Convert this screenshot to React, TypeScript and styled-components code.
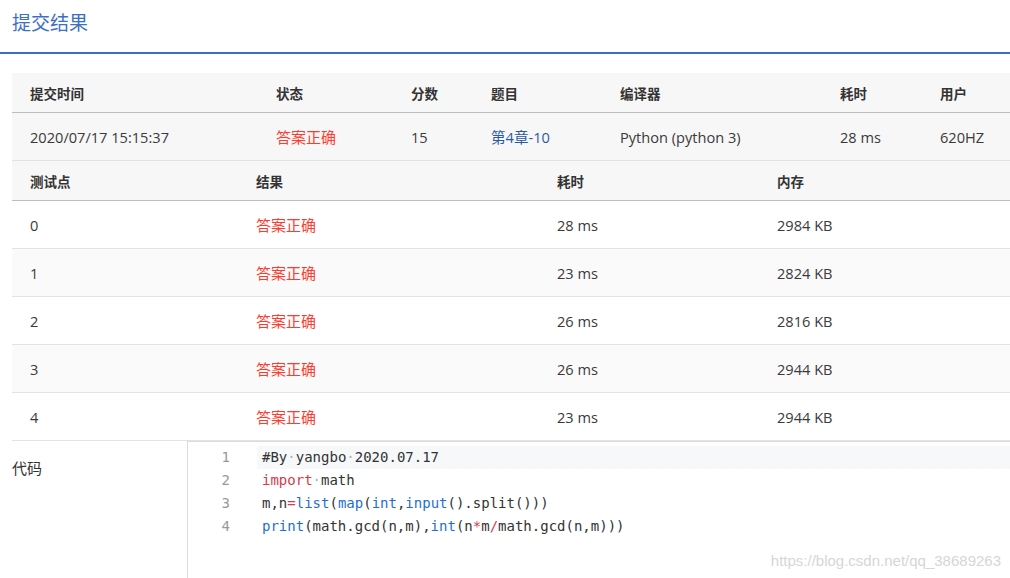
import React from 'react';
import styled, { createGlobalStyle } from 'styled-components';

const GlobalStyle = createGlobalStyle`
  html, body {
    margin: 0;
    padding: 0;
    background: #fff;
  }
  body {
    font-family: 'Open Sans', 'Noto Sans CJK SC', sans-serif;
    color: #333;
  }
`;

type Submission = {
  time: string;
  status: string;
  score: string;
  problem: string;
  compiler: string;
  cost: string;
  user: string;
};

const submission: Submission = {
  time: '2020/07/17 15:15:37',
  status: '答案正确',
  score: '15',
  problem: '第4章-10',
  compiler: 'Python (python 3)',
  cost: '28 ms',
  user: '620HZ',
};

const cases = [
  { id: '0', result: '答案正确', cost: '28 ms', memory: '2984 KB' },
  { id: '1', result: '答案正确', cost: '23 ms', memory: '2824 KB' },
  { id: '2', result: '答案正确', cost: '26 ms', memory: '2816 KB' },
  { id: '3', result: '答案正确', cost: '26 ms', memory: '2944 KB' },
  { id: '4', result: '答案正确', cost: '23 ms', memory: '2944 KB' },
];

type Tok = { t: string; k?: 'kw' | 'fn' | 'op' | 'ws' };

const codeLines: Tok[][] = [
  [
    { t: '#By' },
    { t: '·', k: 'ws' },
    { t: 'yangbo' },
    { t: '·', k: 'ws' },
    { t: '2020.07.17' },
  ],
  [{ t: 'import', k: 'kw' }, { t: '·', k: 'ws' }, { t: 'math' }],
  [
    { t: 'm,n' },
    { t: '=', k: 'op' },
    { t: 'list', k: 'fn' },
    { t: '(' },
    { t: 'map', k: 'fn' },
    { t: '(' },
    { t: 'int', k: 'fn' },
    { t: ',' },
    { t: 'input', k: 'fn' },
    { t: '().split()))' },
  ],
  [
    { t: 'print', k: 'fn' },
    { t: '(math.gcd(n,m),' },
    { t: 'int', k: 'fn' },
    { t: '(n' },
    { t: '*', k: 'op' },
    { t: 'm' },
    { t: '/', k: 'op' },
    { t: 'math.gcd(n,m)))' },
  ],
];

const App = () => {
  return (
    <Page>
      <GlobalStyle />
      <Title>提交结果</Title>
      <Content>
        <Table>
          <colgroup>
            <col style={{ width: 246 }} />
            <col style={{ width: 135 }} />
            <col style={{ width: 80 }} />
            <col style={{ width: 129 }} />
            <col style={{ width: 220 }} />
            <col style={{ width: 100 }} />
            <col />
          </colgroup>
          <thead>
            <tr>
              <Th>提交时间</Th>
              <Th>状态</Th>
              <Th>分数</Th>
              <Th>题目</Th>
              <Th>编译器</Th>
              <Th>耗时</Th>
              <Th>用户</Th>
            </tr>
          </thead>
          <tbody>
            <SummaryRow>
              <Td>{submission.time}</Td>
              <Td>
                <Accepted>{submission.status}</Accepted>
              </Td>
              <Td>{submission.score}</Td>
              <Td>
                <ProblemLink>{submission.problem}</ProblemLink>
              </Td>
              <Td>{submission.compiler}</Td>
              <Td>{submission.cost}</Td>
              <Td>{submission.user}</Td>
            </SummaryRow>
          </tbody>
        </Table>
        <Table>
          <colgroup>
            <col style={{ width: 226 }} />
            <col style={{ width: 301 }} />
            <col style={{ width: 220 }} />
            <col />
          </colgroup>
          <thead>
            <tr>
              <Th>测试点</Th>
              <Th>结果</Th>
              <Th>耗时</Th>
              <Th>内存</Th>
            </tr>
          </thead>
          <tbody>
            {cases.map((c, i) => (
              <CaseRow key={c.id} $striped={i % 2 === 1}>
                <Td>{c.id}</Td>
                <Td>
                  <Accepted>{c.result}</Accepted>
                </Td>
                <Td>{c.cost}</Td>
                <Td>{c.memory}</Td>
              </CaseRow>
            ))}
          </tbody>
        </Table>
        <CodeSection>
          <CodeLabel>代码</CodeLabel>
          <CodeBox>
            {codeLines.map((line, i) => (
              <CodeLine key={i}>
                <LineNo>{i + 1}</LineNo>
                <LineText $active={i === 0}>
                  {line.map((tok, j) => (
                    <Token key={j} $kind={tok.k}>
                      {tok.t}
                    </Token>
                  ))}
                </LineText>
              </CodeLine>
            ))}
          </CodeBox>
        </CodeSection>
      </Content>
      <Watermark>https://blog.csdn.net/qq_38689263</Watermark>
    </Page>
  );
};

const Page = styled.div`
  position: relative;
  width: 1010px;
  height: 578px;
  overflow: hidden;
  background: #fff;
`;

const Title = styled.h2`
  margin: 0;
  height: 54px;
  box-sizing: border-box;
  padding: 9px 0 0 12px;
  font-size: 19px;
  font-weight: 400;
  line-height: 26px;
  color: #3d6fc6;
  border-bottom: 2px solid #3a6cc8;
  font-family: 'Noto Sans CJK SC', sans-serif;
`;

const Content = styled.div`
  padding: 19px 0 0 12px;
`;

const Table = styled.table`
  width: 998px;
  border-collapse: collapse;
  table-layout: fixed;
  font-size: 14.6px;
`;

const Th = styled.th`
  height: 39px;
  padding: 0 0 0 18px;
  text-align: left;
  font-weight: 700;
  font-size: 13.5px;
  color: #333;
  background: #f7f7f7;
  border-bottom: 1px solid #bdbdbd;
  font-family: 'Noto Sans CJK SC', sans-serif;
`;

const Td = styled.td`
  height: 47px;
  padding: 0 0 0 18px;
  text-align: left;
  color: #3a3a3a;
  border-bottom: 1px solid #e3e3e3;
  white-space: nowrap;
`;

const SummaryRow = styled.tr`
  background: #f7f7f7;
`;

const CaseRow = styled.tr<{ $striped?: boolean }>`
  background: ${({ $striped }) => ($striped ? '#fafafa' : '#fff')};
`;

const Accepted = styled.span`
  color: #ff3b30;
  font-size: 15px;
  font-family: 'Noto Sans CJK SC', sans-serif;
`;

const ProblemLink = styled.a`
  color: #2b5aa5;
  text-decoration: none;
`;

const CodeSection = styled.div`
  display: flex;
  height: 137px;
`;

const CodeLabel = styled.div`
  width: 175px;
  padding-top: 16px;
  font-size: 15px;
  color: #333;
  font-family: 'Noto Sans CJK SC', sans-serif;
`;

const CodeBox = styled.div`
  flex: 1;
  border-left: 1px solid #dcdcdc;
  border-top: 1px solid #dcdcdc;
  padding-top: 4px;
  font-family: 'DejaVu Sans Mono', monospace;
  font-size: 14px;
`;

const CodeLine = styled.div`
  display: flex;
  height: 23px;
  line-height: 23px;
`;

const LineNo = styled.div`
  width: 42px;
  text-align: right;
  color: #999;
  flex-shrink: 0;
`;

const LineText = styled.div<{ $active?: boolean }>`
  flex: 1;
  margin-left: 27px;
  padding-left: 5px;
  color: #333;
  white-space: pre;
  background: ${({ $active }) => ($active ? '#f6f8fa' : 'transparent')};
`;

const tokenColors: Record<string, string> = {
  kw: '#d73a49',
  fn: '#1f6fd0',
  op: '#d73a49',
  ws: '#b0b0b0',
};

const Token = styled.span<{ $kind?: string }>`
  color: ${({ $kind }) => ($kind ? tokenColors[$kind] : 'inherit')};
`;

const Watermark = styled.div`
  position: absolute;
  right: 9px;
  bottom: 9px;
  font-family: 'Liberation Sans', Arial, sans-serif;
  font-size: 15px;
  color: #d6d6d6;
`;

export default App;
